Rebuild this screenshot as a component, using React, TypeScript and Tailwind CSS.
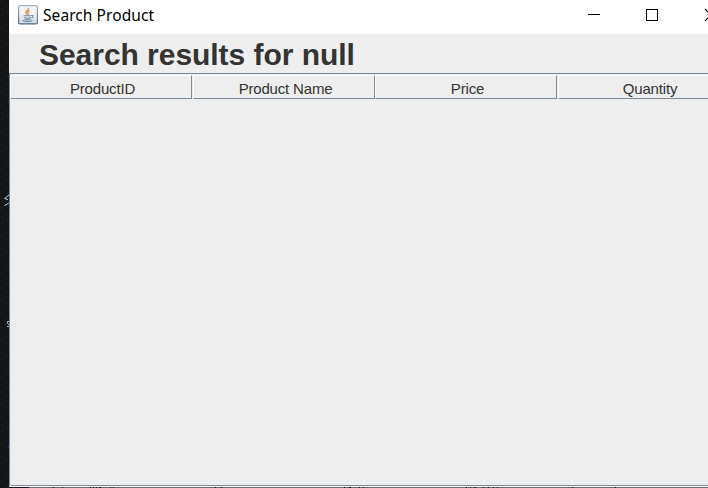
const columns = [
  { label: "ProductID", width: "w-[182px]", cell: "w-[182px] pl-[3px]" },
  { label: "Product Name", width: "w-[183px]", cell: "w-[182px] pl-[3px]" },
  { label: "Price", width: "w-[182px]", cell: "w-[182px] pl-[3px]" },
  { label: "Quantity", width: "w-[184px]", cell: "w-[183px] pl-px" },
];

function JavaIcon() {
  return (
    <svg width="20" height="20" viewBox="0 0 20 20" className="mt-[5px] shrink-0">
      <defs>
        <linearGradient id="tile" x1="0" y1="0" x2="0" y2="1">
          <stop offset="0" stopColor="#f5f7f9" />
          <stop offset="0.5" stopColor="#eef0f2" />
          <stop offset="1" stopColor="#cdd6dd" />
        </linearGradient>
        <linearGradient id="edge" x1="0" y1="0" x2="0" y2="1">
          <stop offset="0" stopColor="#a6b4c1" />
          <stop offset="1" stopColor="#526d88" />
        </linearGradient>
      </defs>
      <rect x="0.6" y="0.6" width="18.8" height="18.3" rx="1.5" fill="url(#tile)" stroke="url(#edge)" strokeWidth="1.2" />
      <path d="M10.600 3c.5 1.800-3.300 2.800-2.800 4.600.2.900 1.300 1.300 1.500 2.100M11.600 5.600c-2.200 1-2.700 1.700-1.400 2.700.5.600.3 1-.3 1.500" fill="none" stroke="#e98b45" strokeWidth="1.3" />
      <path d="M5.5 10.700h7.300M6.200 12.500c2 .8 4.800.8 6.700 0M6.800 14.200c1.800.7 3.800.7 5.400 0M4.500 15.600c2.800 1.200 7.600 1.100 9.800-.1M13.200 10.500c2.500-.5 2.500 1.700.1 2.700" fill="none" stroke="#668ba8" strokeWidth="1.1" />
    </svg>
  );
}

export default function App() {
  return (
    <div className="flex h-[488px] w-[708px] overflow-hidden bg-[#141617] font-['Liberation_Sans',Arial,sans-serif]">
      <div className="w-[9px] shrink-0 overflow-hidden bg-[#141618]">
        <svg width="9" height="488" className="block">
          <defs>
            <pattern id="grain" width="9" height="13" patternUnits="userSpaceOnUse">
              <path d="M1 2h2M6 5h1M3 8h1M7 11h2" stroke="#202326" />
              <path d="M4 1h2M0 6h2M6 9h1" stroke="#0b0d0f" />
            </pattern>
          </defs>
          <rect width="9" height="488" fill="url(#grain)" />
          <path d="M9 195L4.500 198.500L8 199.500M9 202.500L7.500 204L4.500 205.500" fill="none" stroke="#b5dcf0" />
          <path d="M9 321.500H7.500V323.500L9 325M7 326.500H9" fill="none" stroke="#8dbce4" />
          <path d="M8.500 445v3" stroke="#1c3054" />
        </svg>
      </div>
      <main className="flex w-[699px] shrink-0 flex-col overflow-hidden bg-[#eeeeee]">
        <header className="flex h-[34px] shrink-0 items-start bg-white pl-[9px]">
          <JavaIcon />
          <span className="ml-[5px] mt-[4px] w-[180px] whitespace-nowrap font-['Noto_Sans','Open_Sans',sans-serif] text-[15.500px] leading-[23px] tracking-[0.07px] text-black">
            Search Product
          </span>
          <svg width="120" height="34" className="ml-[365px] shrink-0" fill="none" stroke="#000" shapeRendering="crispEdges">
            <path d="M0 14.500h12" />
            <rect x="58.500" y="9.500" width="11" height="11" />
            <path d="M117 9l12 12M117 21l12-12" shapeRendering="auto" strokeWidth="1.100" />
          </svg>
        </header>
        <h1 className="h-[39px] shrink-0 whitespace-nowrap pl-[30px] text-[30px] font-bold leading-[41px] tracking-[-0.04px] text-[#333333]">
          Search results for null
        </h1>
        <section className="flex h-[414px] w-[730px] shrink-0 flex-col border-l border-t border-[#7a8a99]">
          <div className="flex h-[25px] shrink-0 pt-px">
            {columns.map((column) => (
              <div key={column.label} className={`${column.width} flex shrink-0 justify-end`}>
                <div className={`${column.cell} h-[24px] border-b border-l border-r border-t border-b-[#7a8a99] border-l-white border-r-[#7a8a99] border-t-white text-center text-[15px] leading-[26px] tracking-[-0.18px] text-[#333333]`}>
                  {column.label}
                </div>
              </div>
            ))}
          </div>
          <div className="grow" />
          <div className="ml-px h-px shrink-0 bg-[#7a8a99]" />
          <div className="-ml-px h-px shrink-0 bg-white" />
        </section>
        <footer className="h-px shrink-0 bg-[#6c6969]">
          <svg width="699" height="1" className="block" stroke="#1c1619">
            <path d="M0 .5h20M44 .5h1M53 .5h1M81 .5h1M84 .5h1M87 .5h1M90 .5h2M101 .5h1M104 .5h1M206 .5h1M212 .5h1M335 .5h1M340 .5h2M350 .5h1M354 .5h1M457 .5h1M461 .5h1M465 .5h2M474 .5h1M479 .5h1M484 .5h1M488 .5h1M563 .5h1M606 .5h1" />
          </svg>
        </footer>
      </main>
    </div>
  );
}
